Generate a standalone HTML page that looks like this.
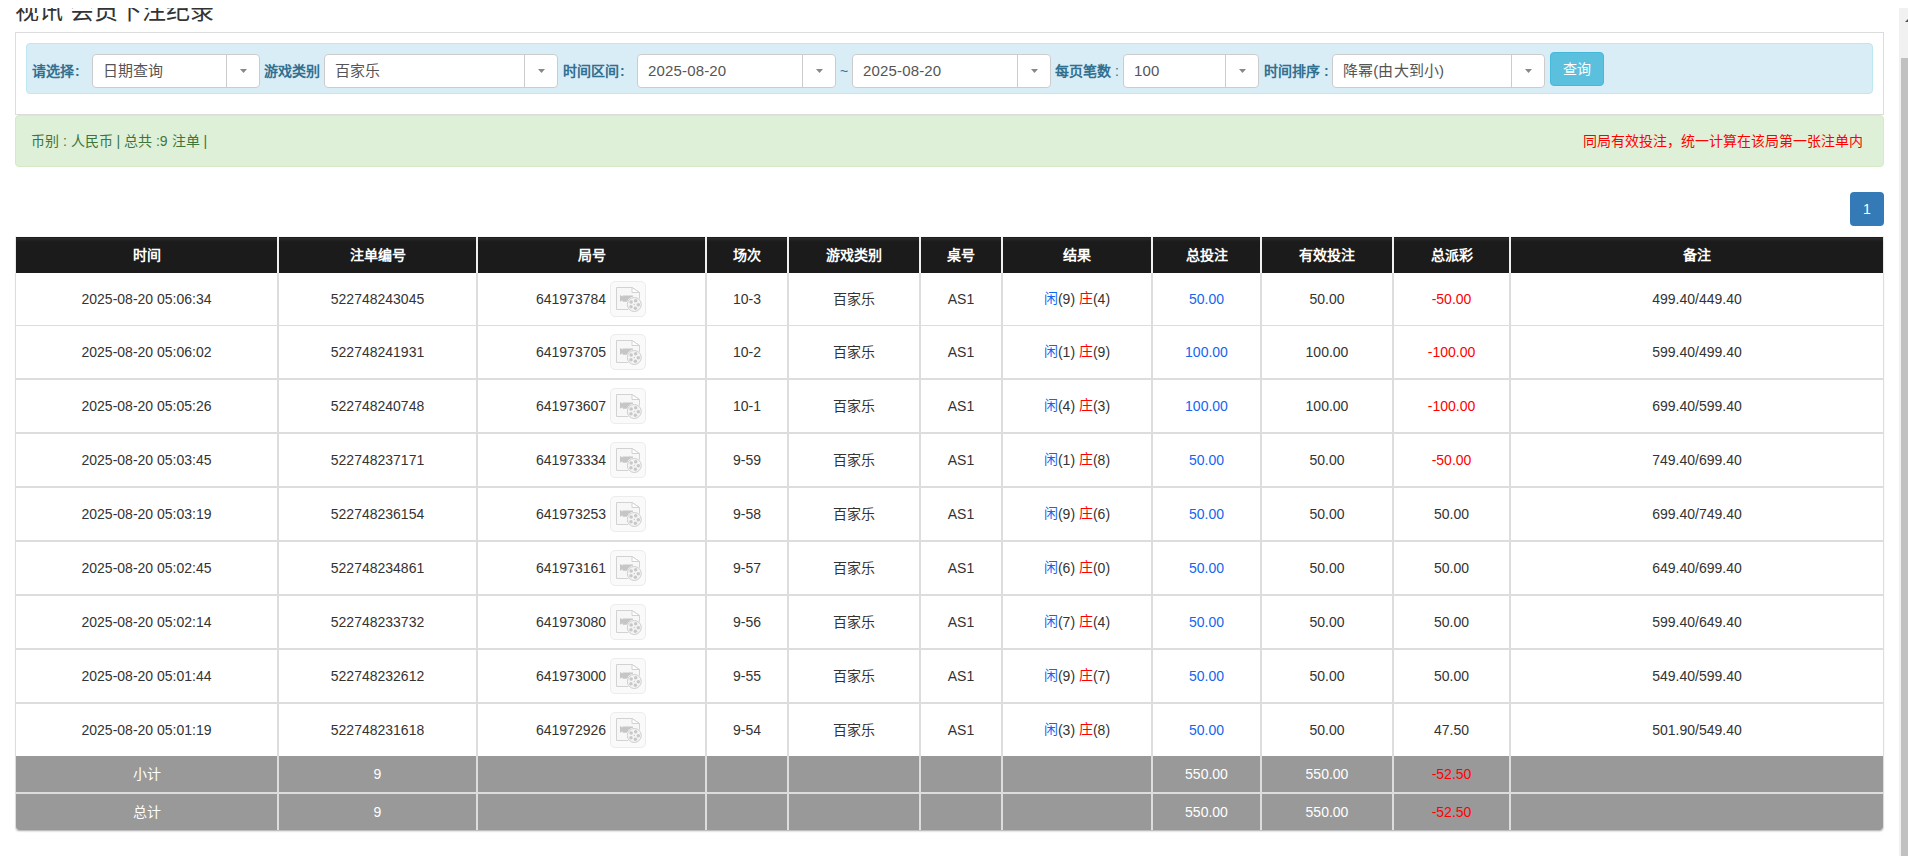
<!DOCTYPE html>
<html lang="zh-CN">
<head>
<meta charset="utf-8">
<title>视讯 会员下注纪录</title>
<style>
*{box-sizing:border-box;}
html,body{margin:0;padding:0;}
body{width:1908px;height:856px;overflow:hidden;background:#fff;position:relative;
  font-family:"Liberation Sans",sans-serif;font-size:14px;color:#333;}
.abs{position:absolute;}
#title{left:15px;top:-6px;font-size:24px;line-height:34px;word-spacing:0.4px;color:#333;white-space:nowrap;font-weight:normal;margin:0;}
#panel{left:15px;top:32px;width:1869px;height:83px;border:1px solid #ddd;background:#fff;}
#filter{left:26px;top:43px;width:1847px;height:51px;background:#d9edf7;border:1px solid #bce8f1;border-radius:4px;}
.lbl{top:54px;height:34px;line-height:34px;font-weight:bold;color:#31708f;font-size:14px;white-space:nowrap;}
.sel{letter-spacing:.16px;top:54px;height:34px;background:#fff;border:1px solid #ccc;border-radius:4px;font-size:15px;color:#555;line-height:32px;padding-left:10px;white-space:nowrap;}
.sel .arr{position:absolute;right:0;top:0;width:33px;height:32px;border-left:1px solid #ccc;}
.sel .arr:after{content:"";position:absolute;left:13px;top:14px;width:7px;height:4px;background:#888;clip-path:polygon(0 0,100% 0,50% 100%);}
#btn{left:1550px;top:52px;width:54px;height:34px;background:#5bc0de;border:1px solid #46b8da;border-radius:4px;color:#fff;font-size:14px;line-height:32px;text-align:center;}
#green{left:15px;top:115px;width:1869px;height:52px;background:#dff0d8;border:1px solid #d6e9c6;border-radius:4px;}
#gl{left:31px;top:131px;line-height:20px;color:#3c763d;font-size:14px;white-space:nowrap;}
#gr{right:45px;top:131px;line-height:20px;color:#f00;font-size:14px;white-space:nowrap;}
#pg{left:1850px;top:192px;width:34px;height:34px;background:#337ab7;border-radius:4px;color:#fff;line-height:34px;text-align:center;font-size:14px;}
#sbtrack{left:1899px;top:8px;width:9px;height:848px;background:#f1f1f1;}
#sbthumb{left:1901px;top:58px;width:7px;height:798px;background:#c1c1c1;}
#sbarr{left:1905px;top:18px;width:0;height:0;border-left:4px solid transparent;border-right:4px solid transparent;border-bottom:4px solid #505050;}

table{position:absolute;left:15px;top:236px;width:1869px;border-collapse:separate;border-spacing:0;table-layout:fixed;
  box-shadow:0 2px 2px -1px rgba(0,0,0,.35);border-radius:0 0 4px 4px;}
th,td{padding:0;text-align:center;vertical-align:middle;font-size:14px;white-space:nowrap;overflow:hidden;}
th{height:37px;background:#1b1b1b linear-gradient(to bottom,#1e1e1e 0,#1e1e1e 1px,#2b2b2b 1px,#282828 2px,#222 3px,#1d1d1d 4px,#1b1b1b 5px);color:#fff;font-weight:bold;padding-bottom:2px;border-top:1px solid #fafafa;border-left:1px solid #f0f0f0;border-right:1px solid #f0f0f0;}
th:first-child{border-left-color:#e8e8e8;}
th:last-child{border-right-color:#e8e8e8;}
td{border-left:1px solid #ddd;border-right:1px solid #ddd;border-bottom:2px solid #ddd;height:54px;color:#333;}
tr.r1 td{height:53px;border-bottom-width:1px;}
tr.r9 td{height:52px;border-bottom:0;}
tr.f td{background:#999;color:#fff;height:38px;border-bottom:2px solid #ddd;}
tr.f2 td{height:36px;border-bottom:0;}
tr.f2 td:first-child{border-bottom-left-radius:4px;}
tr.f2 td:last-child{border-bottom-right-radius:4px;}
.b{color:#1565f0;}
td.cj{padding-bottom:2px;}
span.cj{position:relative;top:-1px;}
.co{margin-left:1px;}
.r,tr.f td.r{color:#f00;}
.cw{display:inline-flex;align-items:center;}
.ic{display:inline-block;width:36px;height:36px;border:1px solid #ececec;border-radius:5px;background:#fafafa;margin-left:4px;margin-right:1px;position:relative;flex:none;}
.ic svg{position:absolute;left:5px;top:5px;}
</style>
</head>
<body>
<h3 id="title" class="abs">视讯 会员下注纪录</h3>
<div class="abs" style="left:0;top:0;width:1908px;height:8px;background:#fff"></div>
<div id="panel" class="abs"></div>
<div id="filter" class="abs"></div>

<div class="abs lbl" style="left:32px">请选择<span class="co">:</span></div>
<div class="abs sel" style="left:92px;width:168px">日期查询<span class="arr"></span></div>
<div class="abs lbl" style="left:264px">游戏类别</div>
<div class="abs sel" style="left:324px;width:234px">百家乐<span class="arr"></span></div>
<div class="abs lbl" style="left:563px">时间区间<span class="co">:</span></div>
<div class="abs sel" style="left:637px;width:199px">2025-08-20<span class="arr"></span></div>
<div class="abs lbl" style="left:840px;font-weight:normal">~</div>
<div class="abs sel" style="left:852px;width:199px">2025-08-20<span class="arr"></span></div>
<div class="abs lbl" style="left:1055px">每页笔数 <span style="font-weight:normal">:</span></div>
<div class="abs sel" style="left:1123px;width:136px">100<span class="arr"></span></div>
<div class="abs lbl" style="left:1264px">时间排序 :</div>
<div class="abs sel" style="left:1332px;width:213px">降幂(由大到小)<span class="arr"></span></div>
<div id="btn" class="abs">查询</div>

<div id="green" class="abs"></div>
<div id="gl" class="abs">币别 : 人民币 | 总共 :9 注单 |</div>
<div id="gr" class="abs">同局有效投注，统一计算在该局第一张注单内</div>
<div id="pg" class="abs">1</div>

<table>
<colgroup><col style="width:263px"><col style="width:199px"><col style="width:229px"><col style="width:82px"><col style="width:132px"><col style="width:82px"><col style="width:150px"><col style="width:109px"><col style="width:132px"><col style="width:117px"><col style="width:374px"></colgroup>
<thead><tr><th>时间</th><th>注单编号</th><th>局号</th><th>场次</th><th>游戏类别</th><th>桌号</th><th>结果</th><th>总投注</th><th>有效投注</th><th>总派彩</th><th>备注</th></tr></thead>
<tbody id="tb">
<tr class="r1"><td>2025-08-20 05:06:34</td><td>522748243045</td><td><span class="cw">641973784<span class="ic"><svg width="26" height="26" viewBox="0 0 26 26"><path d="M0.5 0.5H16L23.5 5.5V22.5H0.5Z" fill="#f7f7f7" stroke="#d2d2d2"/><path d="M16 0.5V5.5H23.5Z" fill="#fff" stroke="#d2d2d2" stroke-linejoin="round"/><path d="M4 8l2.6 1.6V8.4H17v6.4H6.6V13.2L4 14.8z" fill="#c6c6c6"/><circle cx="18.3" cy="17.5" r="7.9" fill="#fbfbfb"/><circle cx="18.3" cy="17.5" r="7.0" fill="#f4f4f4" stroke="#cecece"/><g fill="#c8c8c8"><circle cx="19.67" cy="13.74" r="1.75"/><circle cx="22.30" cy="17.64" r="1.75"/><circle cx="19.40" cy="21.35" r="1.75"/><circle cx="14.98" cy="19.74" r="1.75"/><circle cx="15.15" cy="15.04" r="1.75"/><circle cx="18.3" cy="17.5" r="0.7"/></g></svg></span></span></td><td>10-3</td><td class="cj">百家乐</td><td>AS1</td><td class="cj"><span class="b cj">闲</span>(9) <span class="r cj">庄</span>(4)</td><td class="b">50.00</td><td>50.00</td><td class="r">-50.00</td><td>499.40/449.40</td></tr>
<tr><td>2025-08-20 05:06:02</td><td>522748241931</td><td><span class="cw">641973705<span class="ic"><svg width="26" height="26" viewBox="0 0 26 26"><path d="M0.5 0.5H16L23.5 5.5V22.5H0.5Z" fill="#f7f7f7" stroke="#d2d2d2"/><path d="M16 0.5V5.5H23.5Z" fill="#fff" stroke="#d2d2d2" stroke-linejoin="round"/><path d="M4 8l2.6 1.6V8.4H17v6.4H6.6V13.2L4 14.8z" fill="#c6c6c6"/><circle cx="18.3" cy="17.5" r="7.9" fill="#fbfbfb"/><circle cx="18.3" cy="17.5" r="7.0" fill="#f4f4f4" stroke="#cecece"/><g fill="#c8c8c8"><circle cx="19.67" cy="13.74" r="1.75"/><circle cx="22.30" cy="17.64" r="1.75"/><circle cx="19.40" cy="21.35" r="1.75"/><circle cx="14.98" cy="19.74" r="1.75"/><circle cx="15.15" cy="15.04" r="1.75"/><circle cx="18.3" cy="17.5" r="0.7"/></g></svg></span></span></td><td>10-2</td><td class="cj">百家乐</td><td>AS1</td><td class="cj"><span class="b cj">闲</span>(1) <span class="r cj">庄</span>(9)</td><td class="b">100.00</td><td>100.00</td><td class="r">-100.00</td><td>599.40/499.40</td></tr>
<tr><td>2025-08-20 05:05:26</td><td>522748240748</td><td><span class="cw">641973607<span class="ic"><svg width="26" height="26" viewBox="0 0 26 26"><path d="M0.5 0.5H16L23.5 5.5V22.5H0.5Z" fill="#f7f7f7" stroke="#d2d2d2"/><path d="M16 0.5V5.5H23.5Z" fill="#fff" stroke="#d2d2d2" stroke-linejoin="round"/><path d="M4 8l2.6 1.6V8.4H17v6.4H6.6V13.2L4 14.8z" fill="#c6c6c6"/><circle cx="18.3" cy="17.5" r="7.9" fill="#fbfbfb"/><circle cx="18.3" cy="17.5" r="7.0" fill="#f4f4f4" stroke="#cecece"/><g fill="#c8c8c8"><circle cx="19.67" cy="13.74" r="1.75"/><circle cx="22.30" cy="17.64" r="1.75"/><circle cx="19.40" cy="21.35" r="1.75"/><circle cx="14.98" cy="19.74" r="1.75"/><circle cx="15.15" cy="15.04" r="1.75"/><circle cx="18.3" cy="17.5" r="0.7"/></g></svg></span></span></td><td>10-1</td><td class="cj">百家乐</td><td>AS1</td><td class="cj"><span class="b cj">闲</span>(4) <span class="r cj">庄</span>(3)</td><td class="b">100.00</td><td>100.00</td><td class="r">-100.00</td><td>699.40/599.40</td></tr>
<tr><td>2025-08-20 05:03:45</td><td>522748237171</td><td><span class="cw">641973334<span class="ic"><svg width="26" height="26" viewBox="0 0 26 26"><path d="M0.5 0.5H16L23.5 5.5V22.5H0.5Z" fill="#f7f7f7" stroke="#d2d2d2"/><path d="M16 0.5V5.5H23.5Z" fill="#fff" stroke="#d2d2d2" stroke-linejoin="round"/><path d="M4 8l2.6 1.6V8.4H17v6.4H6.6V13.2L4 14.8z" fill="#c6c6c6"/><circle cx="18.3" cy="17.5" r="7.9" fill="#fbfbfb"/><circle cx="18.3" cy="17.5" r="7.0" fill="#f4f4f4" stroke="#cecece"/><g fill="#c8c8c8"><circle cx="19.67" cy="13.74" r="1.75"/><circle cx="22.30" cy="17.64" r="1.75"/><circle cx="19.40" cy="21.35" r="1.75"/><circle cx="14.98" cy="19.74" r="1.75"/><circle cx="15.15" cy="15.04" r="1.75"/><circle cx="18.3" cy="17.5" r="0.7"/></g></svg></span></span></td><td>9-59</td><td class="cj">百家乐</td><td>AS1</td><td class="cj"><span class="b cj">闲</span>(1) <span class="r cj">庄</span>(8)</td><td class="b">50.00</td><td>50.00</td><td class="r">-50.00</td><td>749.40/699.40</td></tr>
<tr><td>2025-08-20 05:03:19</td><td>522748236154</td><td><span class="cw">641973253<span class="ic"><svg width="26" height="26" viewBox="0 0 26 26"><path d="M0.5 0.5H16L23.5 5.5V22.5H0.5Z" fill="#f7f7f7" stroke="#d2d2d2"/><path d="M16 0.5V5.5H23.5Z" fill="#fff" stroke="#d2d2d2" stroke-linejoin="round"/><path d="M4 8l2.6 1.6V8.4H17v6.4H6.6V13.2L4 14.8z" fill="#c6c6c6"/><circle cx="18.3" cy="17.5" r="7.9" fill="#fbfbfb"/><circle cx="18.3" cy="17.5" r="7.0" fill="#f4f4f4" stroke="#cecece"/><g fill="#c8c8c8"><circle cx="19.67" cy="13.74" r="1.75"/><circle cx="22.30" cy="17.64" r="1.75"/><circle cx="19.40" cy="21.35" r="1.75"/><circle cx="14.98" cy="19.74" r="1.75"/><circle cx="15.15" cy="15.04" r="1.75"/><circle cx="18.3" cy="17.5" r="0.7"/></g></svg></span></span></td><td>9-58</td><td class="cj">百家乐</td><td>AS1</td><td class="cj"><span class="b cj">闲</span>(9) <span class="r cj">庄</span>(6)</td><td class="b">50.00</td><td>50.00</td><td>50.00</td><td>699.40/749.40</td></tr>
<tr><td>2025-08-20 05:02:45</td><td>522748234861</td><td><span class="cw">641973161<span class="ic"><svg width="26" height="26" viewBox="0 0 26 26"><path d="M0.5 0.5H16L23.5 5.5V22.5H0.5Z" fill="#f7f7f7" stroke="#d2d2d2"/><path d="M16 0.5V5.5H23.5Z" fill="#fff" stroke="#d2d2d2" stroke-linejoin="round"/><path d="M4 8l2.6 1.6V8.4H17v6.4H6.6V13.2L4 14.8z" fill="#c6c6c6"/><circle cx="18.3" cy="17.5" r="7.9" fill="#fbfbfb"/><circle cx="18.3" cy="17.5" r="7.0" fill="#f4f4f4" stroke="#cecece"/><g fill="#c8c8c8"><circle cx="19.67" cy="13.74" r="1.75"/><circle cx="22.30" cy="17.64" r="1.75"/><circle cx="19.40" cy="21.35" r="1.75"/><circle cx="14.98" cy="19.74" r="1.75"/><circle cx="15.15" cy="15.04" r="1.75"/><circle cx="18.3" cy="17.5" r="0.7"/></g></svg></span></span></td><td>9-57</td><td class="cj">百家乐</td><td>AS1</td><td class="cj"><span class="b cj">闲</span>(6) <span class="r cj">庄</span>(0)</td><td class="b">50.00</td><td>50.00</td><td>50.00</td><td>649.40/699.40</td></tr>
<tr><td>2025-08-20 05:02:14</td><td>522748233732</td><td><span class="cw">641973080<span class="ic"><svg width="26" height="26" viewBox="0 0 26 26"><path d="M0.5 0.5H16L23.5 5.5V22.5H0.5Z" fill="#f7f7f7" stroke="#d2d2d2"/><path d="M16 0.5V5.5H23.5Z" fill="#fff" stroke="#d2d2d2" stroke-linejoin="round"/><path d="M4 8l2.6 1.6V8.4H17v6.4H6.6V13.2L4 14.8z" fill="#c6c6c6"/><circle cx="18.3" cy="17.5" r="7.9" fill="#fbfbfb"/><circle cx="18.3" cy="17.5" r="7.0" fill="#f4f4f4" stroke="#cecece"/><g fill="#c8c8c8"><circle cx="19.67" cy="13.74" r="1.75"/><circle cx="22.30" cy="17.64" r="1.75"/><circle cx="19.40" cy="21.35" r="1.75"/><circle cx="14.98" cy="19.74" r="1.75"/><circle cx="15.15" cy="15.04" r="1.75"/><circle cx="18.3" cy="17.5" r="0.7"/></g></svg></span></span></td><td>9-56</td><td class="cj">百家乐</td><td>AS1</td><td class="cj"><span class="b cj">闲</span>(7) <span class="r cj">庄</span>(4)</td><td class="b">50.00</td><td>50.00</td><td>50.00</td><td>599.40/649.40</td></tr>
<tr><td>2025-08-20 05:01:44</td><td>522748232612</td><td><span class="cw">641973000<span class="ic"><svg width="26" height="26" viewBox="0 0 26 26"><path d="M0.5 0.5H16L23.5 5.5V22.5H0.5Z" fill="#f7f7f7" stroke="#d2d2d2"/><path d="M16 0.5V5.5H23.5Z" fill="#fff" stroke="#d2d2d2" stroke-linejoin="round"/><path d="M4 8l2.6 1.6V8.4H17v6.4H6.6V13.2L4 14.8z" fill="#c6c6c6"/><circle cx="18.3" cy="17.5" r="7.9" fill="#fbfbfb"/><circle cx="18.3" cy="17.5" r="7.0" fill="#f4f4f4" stroke="#cecece"/><g fill="#c8c8c8"><circle cx="19.67" cy="13.74" r="1.75"/><circle cx="22.30" cy="17.64" r="1.75"/><circle cx="19.40" cy="21.35" r="1.75"/><circle cx="14.98" cy="19.74" r="1.75"/><circle cx="15.15" cy="15.04" r="1.75"/><circle cx="18.3" cy="17.5" r="0.7"/></g></svg></span></span></td><td>9-55</td><td class="cj">百家乐</td><td>AS1</td><td class="cj"><span class="b cj">闲</span>(9) <span class="r cj">庄</span>(7)</td><td class="b">50.00</td><td>50.00</td><td>50.00</td><td>549.40/599.40</td></tr>
<tr class="r9"><td>2025-08-20 05:01:19</td><td>522748231618</td><td><span class="cw">641972926<span class="ic"><svg width="26" height="26" viewBox="0 0 26 26"><path d="M0.5 0.5H16L23.5 5.5V22.5H0.5Z" fill="#f7f7f7" stroke="#d2d2d2"/><path d="M16 0.5V5.5H23.5Z" fill="#fff" stroke="#d2d2d2" stroke-linejoin="round"/><path d="M4 8l2.6 1.6V8.4H17v6.4H6.6V13.2L4 14.8z" fill="#c6c6c6"/><circle cx="18.3" cy="17.5" r="7.9" fill="#fbfbfb"/><circle cx="18.3" cy="17.5" r="7.0" fill="#f4f4f4" stroke="#cecece"/><g fill="#c8c8c8"><circle cx="19.67" cy="13.74" r="1.75"/><circle cx="22.30" cy="17.64" r="1.75"/><circle cx="19.40" cy="21.35" r="1.75"/><circle cx="14.98" cy="19.74" r="1.75"/><circle cx="15.15" cy="15.04" r="1.75"/><circle cx="18.3" cy="17.5" r="0.7"/></g></svg></span></span></td><td>9-54</td><td class="cj">百家乐</td><td>AS1</td><td class="cj"><span class="b cj">闲</span>(3) <span class="r cj">庄</span>(8)</td><td class="b">50.00</td><td>50.00</td><td>47.50</td><td>501.90/549.40</td></tr>
<tr class="f"><td class="cj">小计</td><td>9</td><td></td><td></td><td></td><td></td><td></td><td>550.00</td><td>550.00</td><td class="r">-52.50</td><td></td></tr>
<tr class="f f2"><td class="cj">总计</td><td>9</td><td></td><td></td><td></td><td></td><td></td><td>550.00</td><td>550.00</td><td class="r">-52.50</td><td></td></tr>
</tbody>
</table>

<div id="sbtrack" class="abs"></div>
<div id="sbthumb" class="abs"></div>
<div id="sbarr" class="abs"></div>
</body>
</html>
